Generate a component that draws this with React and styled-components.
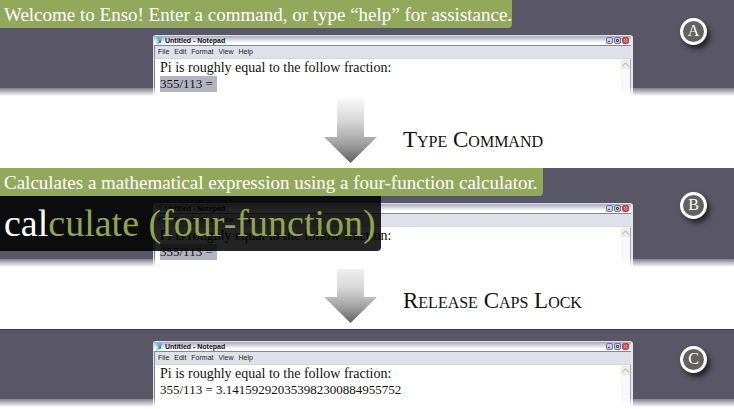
import React from "react";
import styled, { createGlobalStyle } from "styled-components";

const GlobalStyle = createGlobalStyle`
  * { box-sizing: border-box; }
  body { margin: 0; background: #ffffff; font-family: "Liberation Serif", serif; }
  p { margin: 0; }
`;

const Page = styled.main`
  background: #ffffff;
`;

const Scene = styled.section`
  position: relative;
  display: flex;
  padding: ${(p) => (p.$last ? "11px" : "35px")} 101px 0 153px;
  background: #595766;
  border-top: ${(p) => (p.$last ? "1px solid #3f3d48" : "none")};

  &::after {
    content: "";
    position: absolute;
    inset: auto 0 0;
    height: 9px;
    background: linear-gradient(rgba(255, 255, 255, 0.25), #ffffff 90%);
  }
`;

const WindowFrame = styled.article`
  flex: 1;
  min-width: 0;
  border: 1px solid #dddded;
  border-right: 2px solid #e4e4f0;
  border-bottom: 0;
  border-radius: 3px 3px 0 0;
  background: #ffffff;
`;

const TitleBar = styled.header`
  display: flex;
  align-items: center;
  gap: 3px;
  height: 10px;
  padding: 0 2px 0 1px;
  border-bottom: 1px solid #8583a0;
  background: linear-gradient(#aaa8bf, #d6d5e2 40%, #ffffff 75%);
`;

const Title = styled.h2`
  flex: 1;
  margin: 0;
  color: #111111;
  font: bold 7px/8px "Liberation Sans", sans-serif;
`;

const Controls = styled.div`
  display: flex;
  gap: 1px;
`;

const ControlButton = styled.button`
  display: flex;
  width: 7px;
  height: 7px;
  padding: 0;
  border: 1px solid ${(p) => (p.$close ? "#b84a55" : "#70709a")};
  border-radius: 2px;
  background: ${(p) => (p.$close ? "#d94a4a" : "#c9cbe2")};
  color: ${(p) => (p.$close ? "#f4b8b8" : "#44446e")};
`;

const MenuBar = styled.nav`
  display: flex;
  gap: 5px;
  height: 13px;
  padding: 0 3px;
  border-left: 1px solid #8583a0;
  border-bottom: 1px solid #d4d5dd;
  background: #dfe1ea;
`;

const MenuButton = styled.button`
  padding: 0;
  border: 0;
  background: none;
  color: #222222;
  font: 7px/10px "Liberation Sans", sans-serif;
`;

const Body = styled.div`
  display: flex;
  height: ${(p) => p.$height};
  border-left: 1px solid #8583a0;
`;

const Document = styled.div`
  flex: 1;
  padding-left: 5px;
  color: #111111;
  font-size: 14px;
  line-height: 17px;
  white-space: nowrap;
`;

const Figures = styled.p`
  font-size: 13px;
  line-height: 16px;
`;

const Selection = styled.mark`
  position: relative;
  z-index: 1;
  display: inline-block;
  padding-right: 4px;
  background: #b3b3c2;
  color: inherit;
`;

const ScrollBar = styled.div`
  width: 10px;
  padding-top: 1px;
  background: #f8f7fb;
  border-right: 1px solid #aaa8bf;
`;

const ScrollButton = styled.button`
  display: flex;
  width: 9px;
  height: 9px;
  padding: 0;
  border: 1px solid #e9e9dc;
  border-radius: 1px;
  background: #f0f0e4;
  color: #c9c9bb;
`;

const Badge = styled.span`
  position: absolute;
  top: ${(p) => (p.$last ? "16px" : p.$middle ? "24px" : "18px")};
  right: 27px;
  width: 27px;
  height: 27px;
  border: 3px solid #ffffff;
  border-radius: 50%;
  background: #62625f;
  box-shadow: 3px 4px 5px rgba(0, 0, 0, 0.6);
  color: #ffffff;
  font-size: 16px;
  line-height: 20px;
  text-align: center;
`;

const Overlay = styled.div`
  position: absolute;
  z-index: 2;
  top: 0;
  left: 0;
  white-space: nowrap;
`;

const Hint = styled.p`
  width: max-content;
  height: 28px;
  padding: 0 ${(p) => (p.$tight ? "0" : "5px")} 0 4px;
  border-radius: 0 0 4px 0;
  background: #92a95c;
  color: #ffffff;
  font-size: 19px;
  line-height: 29px;
`;

const Command = styled.p`
  width: max-content;
  height: 55px;
  padding: 0 5px 0 4px;
  border-radius: 0 0 4px 0;
  background: rgba(0, 0, 0, 0.86);
  color: #8fa64f;
  font-size: 38px;
  line-height: 54px;
`;

const Typed = styled.span`
  color: #ffffff;
`;

const Step = styled.div`
  display: flex;
  align-items: flex-start;
  gap: 26px;
  height: ${(p) => (p.$short ? "61px" : "71px")};
  padding: ${(p) => (p.$short ? "1px" : "0")} 0 0 324px;
`;

const StepLabel = styled.p`
  padding-top: ${(p) => (p.$short ? "19px" : "30px")};
  color: #111111;
  font-size: 23px;
  line-height: 26px;
  font-variant: small-caps;
  white-space: nowrap;
`;

function NotepadIcon() {
  return (
    <svg width="7" height="7" viewBox="0 0 7 7" aria-hidden="true">
      <path d="M2 0h4l1 1-1 5-4 1-1-2z" fill="#56b9df" />
      <path d="M0 5l2-4 1 5z" fill="#d8eef6" />
      <path d="M5 2l1 3-2 1z" fill="#2777b0" />
    </svg>
  );
}

function Glyph({ d, size = 5 }) {
  return (
    <svg width={size} height={size} viewBox="0 0 5 5" aria-hidden="true">
      <path d={d} fill="none" stroke="currentColor" />
    </svg>
  );
}

function Arrow({ long, id }) {
  const height = long ? 66 : 54;
  const neck = height - 26;
  return (
    <svg width="53" height={height} viewBox={`0 0 53 ${height}`} aria-hidden="true">
      <defs>
        <linearGradient id={id} x1="0" y1="0" x2="0" y2="1">
          <stop offset="0" stopColor={long ? "#fbfbfb" : "#eeeeee"} />
          <stop offset="0.35" stopColor="#d8d8d8" />
          <stop offset="0.7" stopColor="#a2a2a2" />
          <stop offset="1" stopColor="#606060" />
        </linearGradient>
      </defs>
      <path
        d={`M13 0H40V${neck}H53L26.5 ${height}L0 ${neck}H13Z`}
        fill={`url(#${id})`}
      />
    </svg>
  );
}

function Notepad({ children, height }) {
  return (
    <WindowFrame>
      <TitleBar>
        <NotepadIcon />
        <Title>Untitled - Notepad</Title>
        <Controls>
          <ControlButton type="button" aria-label="Minimize">
            <Glyph d="M1 3.5h2" />
          </ControlButton>
          <ControlButton type="button" aria-label="Maximize">
            <Glyph d="M1.5 1.5h2v2h-2z" />
          </ControlButton>
          <ControlButton type="button" aria-label="Close" $close>
            <Glyph d="M1 1l3 3M4 1L1 4" />
          </ControlButton>
        </Controls>
      </TitleBar>
      <MenuBar>
        {["File", "Edit", "Format", "View", "Help"].map((name) => (
          <MenuButton type="button" key={name}>{name}</MenuButton>
        ))}
      </MenuBar>
      <Body $height={height}>
        <Document>
          <p>Pi is roughly equal to the follow fraction:</p>
          <Figures>{children}</Figures>
        </Document>
        <ScrollBar>
          <ScrollButton type="button" aria-label="Scroll up">
            <Glyph d="M0 4l2.5-2.5L5 4" size={7} />
          </ScrollButton>
        </ScrollBar>
      </Body>
    </WindowFrame>
  );
}

export default function App() {
  return (
    <Page>
      <GlobalStyle />
      <Scene>
        <Overlay>
          <Hint $tight>Welcome to Enso! Enter a command, or type “help” for assistance.</Hint>
        </Overlay>
        <Notepad height="38px">
          <Selection>355/113 =</Selection>
        </Notepad>
        <Badge>A</Badge>
      </Scene>
      <Step>
        <Arrow long id="arrow-type" />
        <StepLabel>Type Command</StepLabel>
      </Step>
      <Scene>
        <Overlay>
          <Hint>Calculates a mathematical expression using a four-function calculator.</Hint>
          <Command><Typed>cal</Typed>culate (four-function)</Command>
        </Overlay>
        <Notepad height="41px">
          <Selection>355/113 =</Selection>
        </Notepad>
        <Badge $middle>B</Badge>
      </Scene>
      <Step $short>
        <Arrow id="arrow-release" />
        <StepLabel $short>Release Caps Lock</StepLabel>
      </Step>
      <Scene $last>
        <Notepad height="43px">355/113 = 3.141592920353982300884955752</Notepad>
        <Badge $last>C</Badge>
      </Scene>
    </Page>
  );
}
